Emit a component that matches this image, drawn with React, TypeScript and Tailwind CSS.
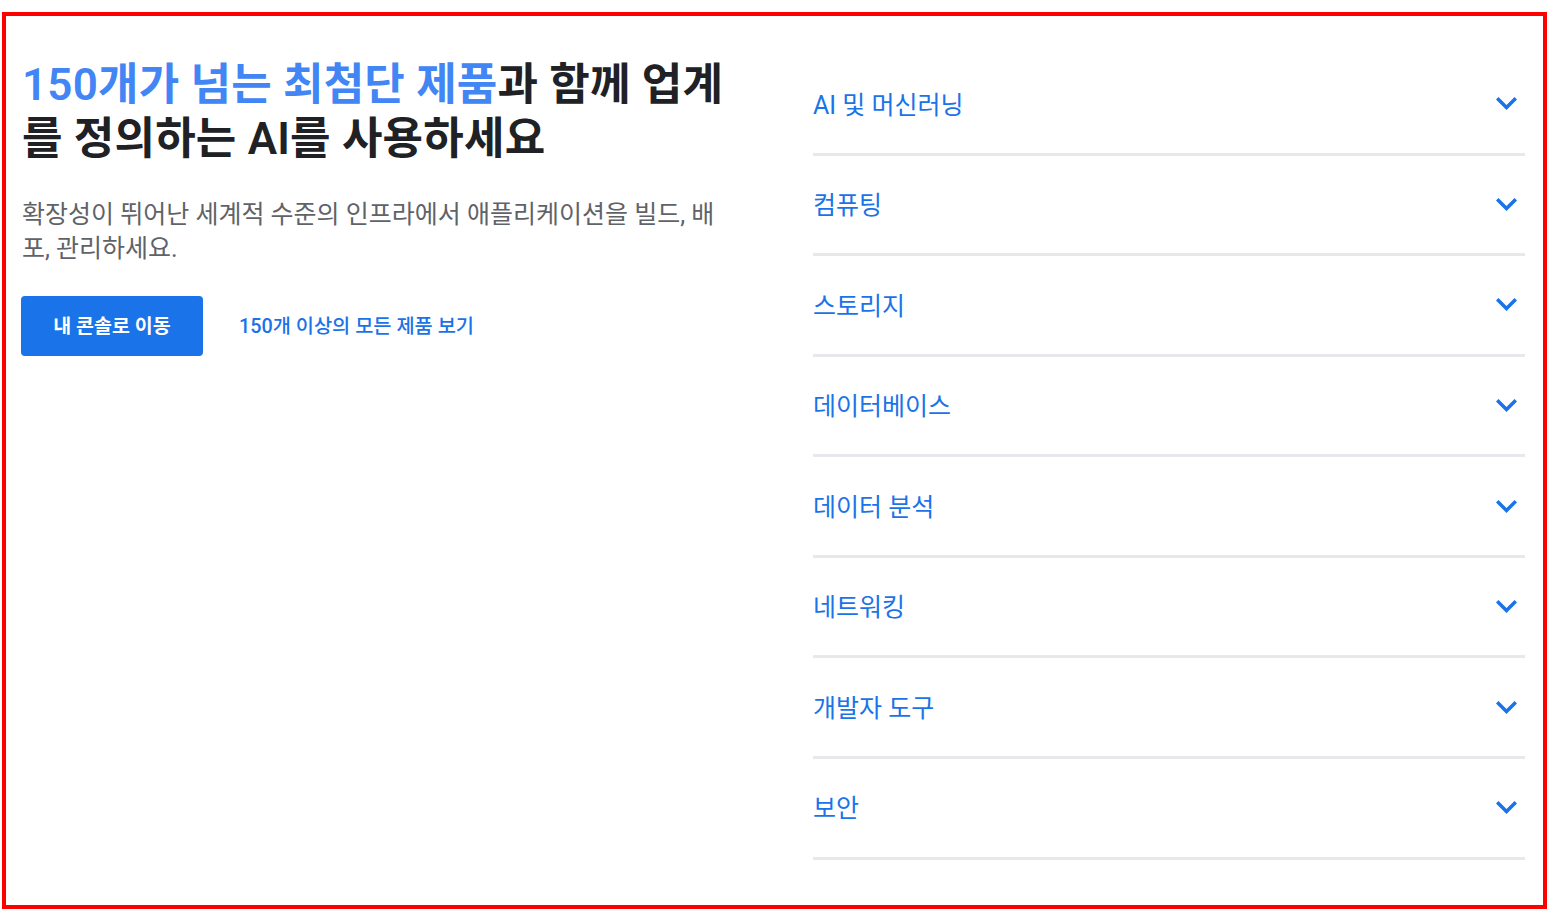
import React from "react";

const items = [
  "AI 및 머신러닝",
  "컴퓨팅",
  "스토리지",
  "데이터베이스",
  "데이터 분석",
  "네트워킹",
  "개발자 도구",
  "보안",
];

function Chevron() {
  return (
    <svg width="21" height="13" viewBox="6 8.59 12 7.41" className="shrink-0">
      <path d="M16.59 8.59L12 13.17 7.41 8.59 6 10l6 6 6-6z" fill="#1a73e8" />
    </svg>
  );
}

export default function App() {
  const font = { fontFamily: 'Roboto, "Noto Sans CJK KR", sans-serif' };
  return (
    <div className="bg-white w-[1558px] h-[922px] pt-[12px] pl-[2px]" style={font}>
      <div className="w-[1545px] h-[897px] border-4 border-[#ff0000] flex pl-[15px] pt-[39px]">
        <div className="w-[741px] pt-[3px]">
          <h1 className="text-[44px] leading-[54px] font-semibold text-[#202124] pl-[1px] tracking-[0.2px]">
            <span className="text-[#4285f4]">150개가 넘는 최첨단 제품</span>과 함께 업계
            <br />를 정의하는 AI를 사용하세요
          </h1>
          <p className="mt-[32px] text-[25px] leading-[34px] text-[#5f6368] pl-[1px]">
            확장성이 뛰어난 세계적 수준의 인프라에서 애플리케이션을 빌드, 배
            <br />포, 관리하세요.
          </p>
          <div className="mt-[30px] flex items-center">
            <button className="w-[182px] h-[60px] rounded-[4px] bg-[#1a73e8] text-white text-[19.5px] font-semibold pt-[1px]">
              내 콘솔로 이동
            </button>
            <a className="ml-[36px] text-[19.75px] font-medium text-[#1a73e8] pt-[1px]">150개 이상의 모든 제품 보기</a>
          </div>
        </div>
        <div className="ml-[51px] w-[712px]">
          {items.map((t) => (
            <div
              key={t}
              className="h-[100.57px] border-b-[3px] border-[#e8e8ec] flex items-center justify-between pr-[8px]"
            >
              <span className="text-[25px] text-[#1a73e8] pt-[3px]">{t}</span>
              <Chevron />
            </div>
          ))}
        </div>
      </div>
    </div>
  );
}
